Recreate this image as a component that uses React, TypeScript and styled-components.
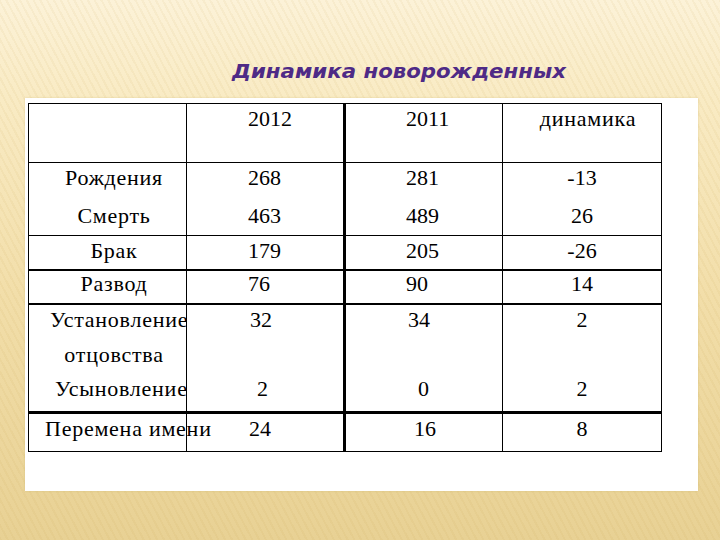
import React from 'react';
import styled, { createGlobalStyle } from 'styled-components';

const GlobalStyle = createGlobalStyle`
  html, body {
    margin: 0;
    padding: 0;
  }
  body {
    width: 720px;
    height: 540px;
    overflow: hidden;
    background:
      repeating-linear-gradient(62deg, rgba(190, 150, 60, 0.07) 0 2px, transparent 2px 6px),
      linear-gradient(180deg, #fcf2d8 0%, #f9ebc4 18%, #f2dea9 55%, #e8d194 100%);
  }
`;

const Page = styled.div`
  width: 720px;
  height: 540px;
  display: flex;
  flex-direction: column;
`;

const Header = styled.div`
  height: 98px;
  box-sizing: border-box;
  padding: 59px 0 0 232px;
`;

const Title = styled.h1`
  margin: 0;
  display: inline-block;
  font-family: 'DejaVu Sans', 'Liberation Sans', sans-serif;
  font-style: italic;
  font-weight: 700;
  font-size: 19px;
  line-height: 24px;
  color: #4e2a86;
  white-space: nowrap;
  transform-origin: left center;
  transform: scaleX(1.12);
`;

const Panel = styled.div`
  margin-left: 25px;
  width: 673px;
  height: 393px;
  box-sizing: border-box;
  padding: 5px 0 0 3px;
  background: #ffffff;
  box-shadow: 0 0 2px rgba(200, 170, 100, 0.4);
`;

const Grid = styled.div<{ $cols: string; $rows: string }>`
  display: grid;
  grid-template-columns: ${({ $cols }) => $cols};
  grid-template-rows: ${({ $rows }) => $rows};
  width: max-content;
  border-top: 1px solid #000;
  border-left: 1px solid #000;
  font-family: 'Liberation Serif', 'Times New Roman', serif;
  font-size: 22px;
  color: #000;
`;

const Cell = styled.div<{ $br: number; $bb: number; $clip?: boolean }>`
  box-sizing: border-box;
  min-width: 0;
  border-right: ${({ $br }) => $br}px solid #000;
  border-bottom: ${({ $bb }) => $bb}px solid #000;
  overflow: ${({ $clip }) => ($clip ? 'hidden' : 'visible')};
`;

const Stack = styled.div<{ $pt: number; $gap: number }>`
  display: flex;
  flex-direction: column;
  gap: ${({ $gap }) => $gap}px;
  margin-top: ${({ $pt }) => $pt}px;
`;

const Line = styled.div<{ $align: string; $pad: number; $wide: boolean }>`
  line-height: 30px;
  height: 30px;
  white-space: nowrap;
  text-align: ${({ $align }) => $align};
  padding-left: ${({ $pad }) => $pad}px;
  letter-spacing: ${({ $wide }) => ($wide ? '0.75px' : '0')};
`;

type LineSpec = string | { t: string; shift?: number; left?: number };

type Col = { w: number; br: number; align: 'left' | 'center'; pl: number };

type Row = {
  h: number;
  bb: number;
  pt?: number;
  gap?: number;
  clipFirst?: boolean;
  cells: LineSpec[][];
};

const cols: Col[] = [
  { w: 158, br: 1, align: 'center', pl: 13 },
  { w: 159, br: 3, align: 'left', pl: 61 },
  { w: 157, br: 1, align: 'left', pl: 60 },
  { w: 159, br: 1, align: 'center', pl: 0 },
];

const rows: Row[] = [
  { h: 59, bb: 1, cells: [[], ['2012'], ['2011'], [{ t: 'динамика', shift: 12 }]] },
  {
    h: 73,
    bb: 1,
    gap: 8,
    cells: [['Рождения', 'Смерть'], ['268', '463'], ['281', '489'], ['-13', '26']],
  },
  { h: 35, bb: 2, cells: [['Брак'], ['179'], ['205'], ['-26']] },
  { h: 34, bb: 2, pt: -2, cells: [['Развод'], ['76'], ['90'], ['14']] },
  {
    h: 109,
    bb: 3,
    gap: 4.5,
    clipFirst: true,
    cells: [
      [{ t: 'Установление', left: 21 }, 'отцовства', { t: 'Усыновление', left: 26 }],
      [{ t: '32', shift: 2 }, '\u00a0', { t: '2', shift: 9 }],
      [{ t: '34', shift: 2 }, '\u00a0', { t: '0', shift: 12 }],
      ['2', '\u00a0', '2'],
    ],
  },
  {
    h: 38,
    bb: 1,
    cells: [[{ t: 'Перемена имени', left: 16 }], [{ t: '24', shift: 1 }], [{ t: '16', shift: 8 }], ['8']],
  },
];

const cyrillic = /[а-яё]/i;

const App: React.FC = () => {
  return (
    <>
      <GlobalStyle />
      <Page>
        <Header>
          <Title>Динамика новорожденных</Title>
        </Header>
        <Panel>
          <Grid
            $cols={cols.map((c) => `${c.w}px`).join(' ')}
            $rows={rows.map((r) => `${r.h}px`).join(' ')}
          >
            {rows.map((row, ri) =>
              row.cells.map((lines, ci) => {
                const col = cols[ci];
                return (
                  <Cell key={`${ri}-${ci}`} $br={col.br} $bb={row.bb} $clip={ci === 0 && row.clipFirst}>
                    <Stack $pt={row.pt ?? 0} $gap={row.gap ?? 0}>
                      {lines.map((l, li) => {
                        const spec = typeof l === 'string' ? { t: l } : l;
                        const isLeft = spec.left !== undefined;
                        return (
                          <Line
                            key={li}
                            $align={isLeft ? 'left' : col.align}
                            $pad={isLeft ? spec.left! : col.pl + (spec.shift ?? 0)}
                            $wide={cyrillic.test(spec.t)}
                          >
                            {spec.t}
                          </Line>
                        );
                      })}
                    </Stack>
                  </Cell>
                );
              })
            )}
          </Grid>
        </Panel>
      </Page>
    </>
  );
};

export default App;
